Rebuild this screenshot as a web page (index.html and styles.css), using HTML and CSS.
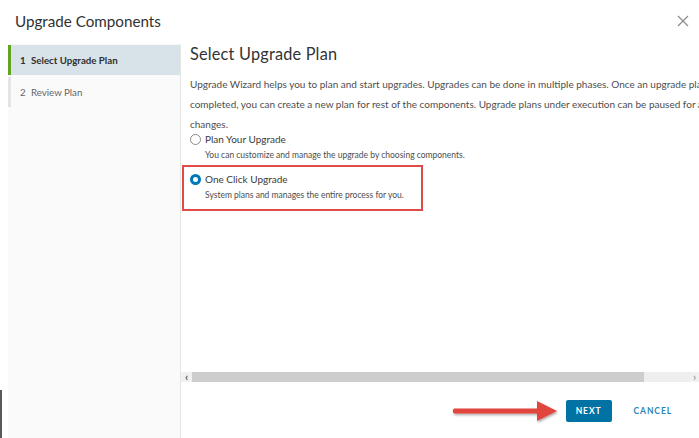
FILE: index.html
```html
<!DOCTYPE html>
<html>
<head>
<meta charset="utf-8">
<link rel="stylesheet" href="styles.css">
</head>
<body>
<div class="edge"></div>
<div class="modal">
  <div class="header">
    <h1 class="title">Upgrade Components</h1>
    <svg class="close" width="12" height="12" viewBox="0 0 12 12"><path d="M1 1 L11 11 M11 1 L1 11" stroke="#8c8c8c" stroke-width="1.2" fill="none"/></svg>
  </div>
  <div class="main">
    <nav class="steps">
      <div class="step active"><span class="num">1</span>Select Upgrade Plan</div>
      <div class="step"><span class="num">2</span>Review Plan</div>
    </nav>
    <section class="content">
      <div class="scrollarea">
        <div class="inner">
          <h2 class="heading">Select Upgrade Plan</h2>
          <p class="desc">Upgrade Wizard helps you to plan and start upgrades. Upgrades can be done in multiple phases. Once an upgrade plan is completed, you can create a new plan for rest of the components. Upgrade plans under execution can be paused for any changes.</p>
          <div class="option">
            <div class="opt-row"><span class="radio"></span><span class="opt-label">Plan Your Upgrade</span></div>
            <div class="opt-help">You can customize and manage the upgrade by choosing components.</div>
          </div>
          <div class="option highlighted">
            <div class="opt-row"><span class="radio checked"></span><span class="opt-label">One Click Upgrade</span></div>
            <div class="opt-help">System plans and manages the entire process for you.</div>
          </div>
        </div>
      </div>
      <div class="hscroll">
        <span class="arrow-btn">&#8249;</span>
        <span class="thumb"></span>
        <span class="track"></span>
        <span class="arrow-btn right">&#8250;</span>
      </div>
      <div class="footer">
        <button class="btn primary">NEXT</button>
        <button class="btn link">CANCEL</button>
        <svg class="annot" width="112" height="26" viewBox="0 0 112 26">
          <defs><filter id="sh" x="-10%" y="-30%" width="130%" height="170%"><feDropShadow dx="1" dy="1.5" stdDeviation="1" flood-color="#000" flood-opacity="0.35"/></filter></defs>
          <path d="M3 10.5 L86 10.5 L86 3 L106 13 L86 23 L86 15.5 L3 15.5 Q0.5 13 3 10.5 Z" fill="#e2453c" filter="url(#sh)"/>
        </svg>
      </div>
    </section>
  </div>
</div>
</body>
</html>
```
FILE: styles.css
```css
* { box-sizing: border-box; }
html, body { margin: 0; padding: 0; }
body {
  width: 699px;
  height: 438px;
  overflow: hidden;
  background: #fff;
  font-family: Lato, "Open Sans", "Liberation Sans", sans-serif;
  color: #333;
  position: relative;
}
.edge {
  position: absolute;
  left: 0;
  top: 390px;
  width: 2px;
  height: 48px;
  background: #5a5a5a;
}
.modal {
  display: flex;
  flex-direction: column;
  height: 438px;
}
.header {
  height: 44px;
  flex: none;
  display: flex;
  align-items: center;
  justify-content: space-between;
  padding: 0 10px 2px 15px;
}
.title {
  margin: 0;
  font-size: 15.2px;
  font-weight: 400;
  color: #313131;
}
.main {
  flex: 1;
  display: flex;
  padding-left: 8px;
  min-height: 0;
}
.steps {
  width: 173px;
  flex: none;
  background: #fafafa;
  border-right: 1px solid #e6e6e6;
  padding-top: 1px;
}
.step {
  height: 30px;
  display: flex;
  align-items: center;
  padding-left: 9px;
  border-left: 3px solid #e4e4e4;
  font-size: 9.7px;
  color: #666;
  margin-bottom: 2px;
}
.step .num { width: 11px; }
.step.active {
  border-left-color: #62a420;
  background: #d8e3e9;
  color: #2f2f2f;
  font-weight: 700;
}
.content {
  flex: 1;
  display: flex;
  flex-direction: column;
  min-width: 0;
}
.scrollarea {
  flex: 1;
  overflow: hidden;
}
.inner {
  width: 640px;
  padding: 0 0 0 9px;
}
.heading {
  margin: 0;
  font-size: 16.3px;
  font-weight: 400;
  color: #333;
  line-height: 20px;
  letter-spacing: 0.2px;
}
.desc {
  margin: 10px 0 0;
  width: 552px;
  font-size: 10px;
  line-height: 20px;
  color: #4e4e4e;
}
.option {
  margin-top: -3px;
}
.opt-row {
  display: flex;
  align-items: center;
  height: 16px;
}
.radio {
  width: 11px;
  height: 11px;
  border-radius: 50%;
  border: 1px solid #8a8a8a;
  background: #fff;
  margin-right: 4px;
  flex: none;
}
.radio.checked {
  border: 3.5px solid #0079b8;
  background: #fff;
}
.opt-label {
  font-size: 10px;
  color: #3a3a3a;
}
.opt-help {
  font-size: 8.5px;
  color: #4d4d4d;
  padding-left: 15px;
  margin-top: 1px;
  line-height: 14px;
}
.option.highlighted {
  margin-top: 3px;
  margin-left: -8px;
  width: 241px;
  border: 2px solid #e04b47;
  padding: 4px 0 7px 6px;
}
.hscroll {
  height: 10px;
  display: flex;
  margin-bottom: 18px;
  background: #f1f1f1;
  flex: none;
}
.arrow-btn {
  width: 11px;
  font-size: 11px;
  line-height: 9px;
  color: #555;
  text-align: center;
  font-weight: 700;
}
.arrow-btn.right { width: 9px; color: #888; font-weight: 400; }
.thumb { width: 452px; background: #cdcdcd; }
.track { flex: 1; background: #eeeeee; }
.footer {
  height: 38px;
  flex: none;
  display: flex;
  align-items: flex-start;
  justify-content: flex-end;
  padding-right: 21px;
  position: relative;
}
.btn {
  font-family: Lato, "Open Sans", "Liberation Sans", sans-serif;
  font-size: 8.5px;
  font-weight: 700;
  letter-spacing: 0.9px;
  border: none;
  cursor: pointer;
}
.btn.primary {
  width: 46px;
  height: 22px;
  background: #0072a3;
  color: #fff;
  border-radius: 2px;
  padding: 0;
}
.btn.link {
  background: none;
  color: #2b86b8;
  height: 22px;
  margin-left: 16px;
  padding: 0 6px;
}
.annot {
  position: absolute;
  left: 270px;
  top: -2px;
}
```
